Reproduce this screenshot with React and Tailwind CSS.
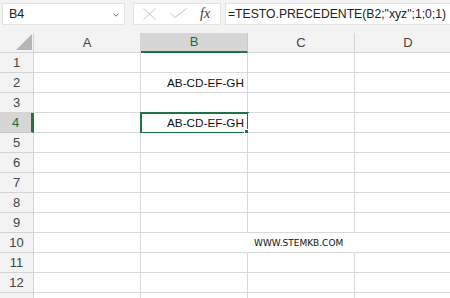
import React from 'react';

const cols = ['A', 'B', 'C', 'D'];
const rows = [1, 2, 3, 4, 5, 6, 7, 8, 9, 10, 11, 12, 13];
const colW = ['w-[107px]', 'w-[107px]', 'w-[107px]', 'w-[107px]'];

function TopBar() {
  return (
    <div className="h-[33px] bg-[#f3f3f3] flex items-start pt-[3px] pl-[2px]">
      {/* Name box */}
      <div className="w-[123px] h-[22px] bg-white border border-[#e3e3e3] flex items-center justify-between pl-[6px] pr-[5px]">
        <span className="text-[12.5px] text-[#222] leading-none">B4</span>
        <svg width="6" height="4" viewBox="0 0 6 4" className="mt-[1px]">
          <path d="M0.5 0.8 L3 3.2 L5.5 0.8" fill="none" stroke="#666" strokeWidth="1" />
        </svg>
      </div>

      {/* Cancel / enter / fx */}
      <div className="ml-[8px] w-[88px] h-[22px] bg-white border border-[#e3e3e3] flex items-center relative">
        <svg width="13" height="12" viewBox="0 0 13 12" className="ml-[9px]">
          <path d="M0.5 0.5 L12.5 11.5 M12.5 0.5 L0.5 11.5" stroke="#c4c4c4" strokeWidth="1" fill="none" />
        </svg>
        <svg width="17" height="10" viewBox="0 0 17 10" className="ml-[14px] -mt-[2px]">
          <path d="M0.5 5 L5 9.5 L16.5 0.5" stroke="#c4c4c4" strokeWidth="1" fill="none" />
        </svg>
        <span className="ml-[13px] text-[14px] italic text-[#3a3a3a] leading-none" style={{ fontFamily: '"Liberation Serif", serif' }}>
          fx
        </span>
      </div>

      {/* Formula */}
      <div className="ml-[4px] flex-1 h-[22px] bg-white border border-[#e3e3e3] border-r-0 flex items-center pl-[2px]">
        <span className="text-[12.2px] text-[#222] leading-none whitespace-nowrap">=TESTO.PRECEDENTE(B2;"xyz";1;0;1)</span>
      </div>
    </div>
  );
}

function HeaderRow() {
  return (
    <div className="flex h-[20px]">
      <div className="w-[34px] shrink-0 bg-[#f3f3f3] border-r border-b border-[#d4d4d4] relative">
        <svg width="16" height="16" viewBox="0 0 16 16" className="absolute right-[1px] bottom-[2px]">
          <path d="M16 0 L16 16 L0 16 Z" fill="#b5b5b5" />
        </svg>
      </div>
      {cols.map((c, i) => {
        const active = c === 'B';
        return (
          <div
            key={c}
            className={`${colW[i]} shrink-0 flex items-center justify-center text-[13px] ${
              active
                ? 'bg-[#d6d6d6] text-[#1e6b40] border-b-2 border-[#217346] border-r border-r-[#c8c8c8]'
                : 'bg-[#f3f3f3] text-[#444] border-b border-r border-[#d4d4d4]'
            }`}
          >
            {c}
          </div>
        );
      })}
    </div>
  );
}

function Row({ n }) {
  const active = n === 4;
  // last row is only partly in view, its number falls below the edge
  const label = n < 13 ? n : '';
  return (
    <div className="flex h-[20px]">
      <div
        className={`w-[34px] shrink-0 flex items-center justify-center text-[13px] border-b ${
          active
            ? 'bg-[#d6d6d6] text-[#1e6b40] border-r-[3px] border-r-[#217346] border-b-[#c8c8c8]'
            : 'bg-[#f3f3f3] text-[#444] border-r border-[#d4d4d4]'
        }`}
      >
        {label}
      </div>
      {cols.map((c, i) => {
        const noRight = n === 10 && (c === 'B' || c === 'C');
        return (
          <div
            key={c}
            className={`${colW[i]} shrink-0 relative bg-white border-b border-[#d9d9d9] ${
              noRight ? 'border-r border-r-white' : 'border-r border-r-[#d9d9d9]'
            } flex items-end justify-end pr-[3px] pb-[3px]`}
          >
            {(n === 2 || n === 4) && c === 'B' && (
              <span className="text-[11.75px] text-[#111] leading-none">AB-CD-EF-GH</span>
            )}
            {n === 10 && c === 'C' && (
              <span
                className="absolute left-[6px] top-[6px] text-[9px] text-[#111] leading-none whitespace-nowrap"
                style={{ fontFamily: '"DejaVu Sans", sans-serif' }}
              >
                WWW.STEMKB.COM
              </span>
            )}
            {n === 4 && c === 'B' && (
              <>
                <div className="absolute -left-[1px] -top-[1px] w-[109px] h-[22px] border-2 border-[#217346] pointer-events-none" />
                <div className="absolute -right-[3px] -bottom-[3px] w-[5px] h-[5px] bg-[#217346] outline outline-1 outline-white" />
              </>
            )}
          </div>
        );
      })}
    </div>
  );
}

export default function App() {
  return (
    <div className="w-[450px] h-[298px] overflow-hidden bg-white" style={{ fontFamily: '"Liberation Sans", Arial, sans-serif' }}>
      <TopBar />
      <HeaderRow />
      {rows.map((n) => (
        <Row key={n} n={n} />
      ))}
    </div>
  );
}
